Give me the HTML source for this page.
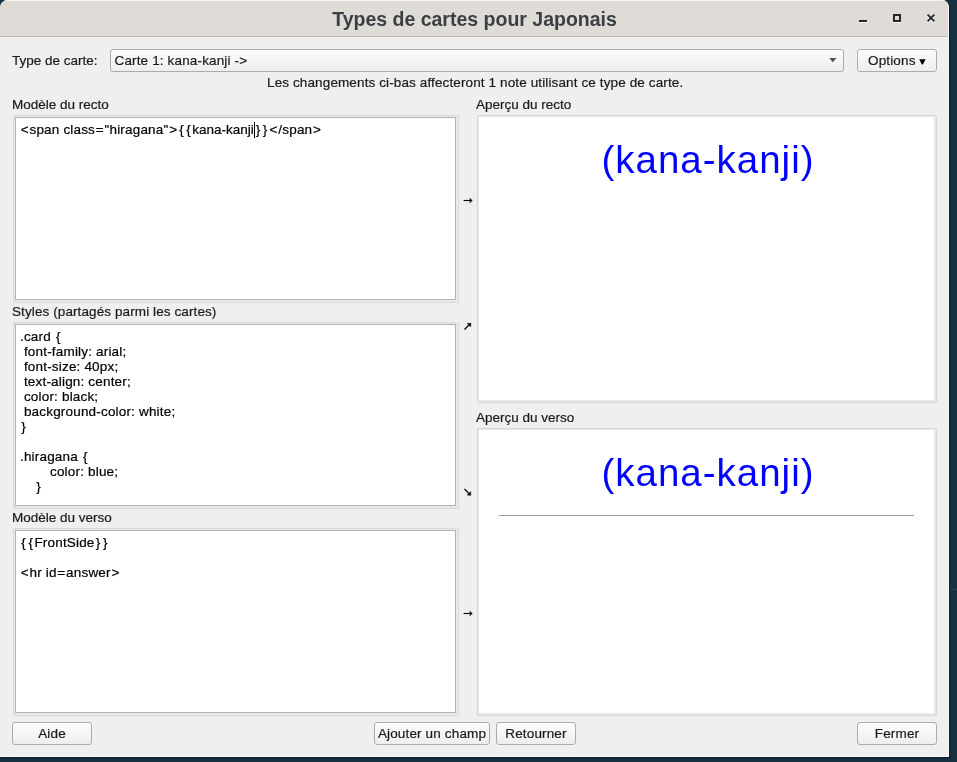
<!DOCTYPE html>
<html><head><meta charset="utf-8">
<style>
*{box-sizing:border-box;margin:0;padding:0}
html,body{width:957px;height:762px;overflow:hidden}
body{background:#16303f;-webkit-font-smoothing:antialiased;font-family:"Liberation Sans",sans-serif;font-size:13.5px;color:#1a1a1a;position:relative;-webkit-text-stroke:0.2px currentColor}
.abs{position:absolute}
.t{position:absolute;white-space:pre;line-height:15px;height:15px}
#win{position:absolute;will-change:transform;left:0;top:0;width:950px;height:758px;background:#efefef;border-radius:8px 8px 0 0;overflow:hidden;border-right:1px solid #0b1c26;border-bottom:1px solid #0b1c26}
#hl-r{position:absolute;left:948px;top:6px;width:1px;height:751px;background:#fdfdfd}
#hl-b{position:absolute;left:0;top:756px;width:949px;height:1px;background:#fdfdfd}
#title{position:absolute;left:0;top:0;width:949px;height:36px;background:#dfdcd8;border-top:1px solid #f6f5f4}
#title-line{position:absolute;left:0;top:36px;width:949px;height:1px;background:#bfb8b0}
#title-line2{position:absolute;left:0;top:37px;width:949px;height:1px;background:#f3f3f3}
#title .tt{-webkit-text-stroke:0;position:absolute;left:0;width:949px;top:7px;text-align:center;font-weight:bold;font-size:19.5px;line-height:22px;color:#3a3f44}
.btn{position:absolute;height:23px;border:1px solid #acacac;border-radius:3px;background:linear-gradient(#fcfcfc,#eeeeee);text-align:center;line-height:21px;color:#1a1a1a;white-space:pre;font-size:13.5px;letter-spacing:0.15px}
.frame{position:absolute;border:1px solid #d9d9d9;border-radius:2px;background:#e9e9e9}
.frame .in{position:absolute;left:1px;top:1px;right:2px;bottom:2px;border:1px solid #b3b3b3;background:#fff}
.pframe{position:absolute;border:1px solid #d6d6d6;border-radius:2px;background:#e9e9e9}
.pframe .in{position:absolute;left:1px;top:1px;right:2px;bottom:2px;background:#fff}
.ed{color:#000;letter-spacing:0.18px}
.ed b{font-weight:normal;padding:0 0.7px}
.ed i{font-style:normal;padding:0 1.25px}
.cur{display:inline-block;width:1px;height:16px;background:#000;vertical-align:top;margin-left:0.5px;margin-right:-1px;position:relative;top:0px}
.pv{-webkit-text-stroke:0;position:absolute;left:0;width:100%;text-align:center;font-size:38.5px;letter-spacing:1px;padding-left:3px;line-height:46px;color:#0000ff;white-space:pre}
</style></head><body>
<div class="abs" style="left:950px;top:589px;width:7px;height:1px;background:#2b4554"></div>
<div id="win">
  <div id="title"><div class="tt">Types de cartes pour Japonais</div>
    <div class="abs" style="left:859px;top:19px;width:8px;height:2px;background:#24282b;box-shadow:0 1px 0 #fbfaf9"></div>
    <div class="abs" style="left:893px;top:13px;width:8px;height:8px;border:2px solid #24282b;box-shadow:0 1px 0 #fbfaf9"></div>
    <svg class="abs" style="left:925px;top:10px" width="13" height="13" viewBox="0 0 13 13"><path d="M2.6 3.6 L9.4 10.4 M9.4 3.6 L2.6 10.4" stroke="#fbfaf9" stroke-width="1.7" transform="translate(0,1)"/><path d="M2.6 3.6 L9.4 10.4 M9.4 3.6 L2.6 10.4" stroke="#24282b" stroke-width="1.8"/></svg>
  </div>
  <div id="title-line"></div>
  <div id="title-line2"></div>

  <div class="t" style="left:12px;top:53px">Type de carte:</div>
  <div class="btn" style="left:110px;top:49px;width:734px;text-align:left;padding-left:3.5px;font-size:13.5px">Carte 1: kana-kanji -&gt;</div>
  <svg class="abs" style="left:829px;top:58px" width="8" height="5" viewBox="0 0 8 5"><path d="M0.2 0 L7.5 0 L3.85 4.3 Z" fill="#505050"/></svg>
  <div class="btn" style="left:857px;top:49px;width:80px;text-align:left;padding-left:10px">Options</div>
  <svg class="abs" style="left:919px;top:59px" width="7" height="6" viewBox="0 0 7 6"><path d="M0.2 0.2 H6.6 L3.9 5.6 H2.9 Z" fill="#000"/></svg>

  <div class="t" style="left:267px;top:75px;letter-spacing:0.12px">Les changements ci-bas affecteront 1 note utilisant ce type de carte.</div>

  <div class="t" style="left:12px;top:97px">Modèle du recto</div>
  <div class="frame" style="left:13px;top:115px;width:446px;height:188px"><div class="in">
    <div class="t ed" style="left:4px;top:4px"><b>&lt;</b>span class<b>=</b>"hiragana"<b>&gt;</b><i>{</i><i>{</i><span style="letter-spacing:0">kana-kanji</span><span class="cur"></span><i style="padding-left:1.5px">}</i><i style="padding-left:1px;padding-right:1.4px">}</i><b>&lt;</b>/span<b>&gt;</b></div>
  </div></div>

  <div class="t" style="left:12px;top:304px;letter-spacing:0.1px">Styles (partagés parmi les cartes)</div>
  <div class="frame" style="left:13px;top:322px;width:446px;height:187px"><div class="in">
    <div class="t ed" style="left:4px;top:4px">.card <i>{</i></div>
    <div class="t ed" style="left:4px;top:19px"> font-family: arial;</div>
    <div class="t ed" style="left:4px;top:34px"> font-size: 40px;</div>
    <div class="t ed" style="left:4px;top:49px"> text-align: center;</div>
    <div class="t ed" style="left:4px;top:64px"> color: black;</div>
    <div class="t ed" style="left:4px;top:79px"> background-color: white;</div>
    <div class="t ed" style="left:4px;top:94px"><i>}</i></div>
    <div class="t ed" style="left:4px;top:124px">.hiragana <i>{</i></div>
    <div class="t ed" style="left:34px;top:139px">color: blue;</div>
    <div class="t ed" style="left:19px;top:154px"><i>}</i></div>
  </div></div>

  <div class="t" style="left:12px;top:510px">Modèle du verso</div>
  <div class="frame" style="left:13px;top:528px;width:446px;height:188px"><div class="in">
    <div class="t ed" style="left:4px;top:4px"><i>{</i><i>{</i>FrontSide<i>}</i><i>}</i></div>
    <div class="t ed" style="left:4px;top:34px"><b>&lt;</b>hr id<b>=</b>answer<b>&gt;</b></div>
  </div></div>

  <div class="t" style="left:476px;top:97px">Aperçu du recto</div>
  <div class="pframe" style="left:477px;top:115px;width:460px;height:288px"><div class="in">
    <div class="pv" style="top:20px">(kana-kanji)</div>
  </div></div>

  <div class="t" style="left:476px;top:410px">Aperçu du verso</div>
  <div class="pframe" style="left:477px;top:428px;width:460px;height:288px"><div class="in">
    <div class="pv" style="top:20px">(kana-kanji)</div>
    <div class="abs" style="left:20px;top:85px;width:415px;height:1px;background:#9a9a9a"></div>
  </div></div>

  <svg class="abs" style="left:460px;top:194px" width="16" height="12" viewBox="0 0 16 12"><path d="M3.6 6.5 H11.2" stroke="#000" stroke-width="1.15"/><path d="M9.7 4.2 L12.3 6.5 L9.7 8.8 L10.5 6.5 Z" fill="#000" stroke="#000" stroke-width="0.5" stroke-linejoin="round"/></svg>
  <svg class="abs" style="left:460px;top:318px" width="16" height="16" viewBox="0 0 16 16"><path d="M4.5 11.5 L9.6 6.4" stroke="#000" stroke-width="1.3"/><path d="M7.3 5.5 L10.8 5.3 L10.6 8.8 Z" fill="#000" stroke="#000" stroke-width="0.6" stroke-linejoin="round"/></svg>
  <svg class="abs" style="left:460px;top:485px" width="16" height="16" viewBox="0 0 16 16"><path d="M4.5 4.0 L9.6 9.1" stroke="#000" stroke-width="1.3"/><path d="M7.3 10.0 L10.8 10.2 L10.6 6.7 Z" fill="#000" stroke="#000" stroke-width="0.6" stroke-linejoin="round"/></svg>
  <svg class="abs" style="left:460px;top:607px" width="16" height="12" viewBox="0 0 16 12"><path d="M3.6 6.5 H11.2" stroke="#000" stroke-width="1.15"/><path d="M9.7 4.2 L12.3 6.5 L9.7 8.8 L10.5 6.5 Z" fill="#000" stroke="#000" stroke-width="0.5" stroke-linejoin="round"/></svg>

  <div class="btn" style="left:12px;top:722px;width:80px">Aide</div>
  <div class="btn" style="left:374px;top:722px;width:116px">Ajouter un champ</div>
  <div class="btn" style="left:496px;top:722px;width:80px">Retourner</div>
  <div class="btn" style="left:857px;top:722px;width:80px">Fermer</div>

  <div id="hl-r"></div>
  <div id="hl-b"></div>
</div>
</body></html>
